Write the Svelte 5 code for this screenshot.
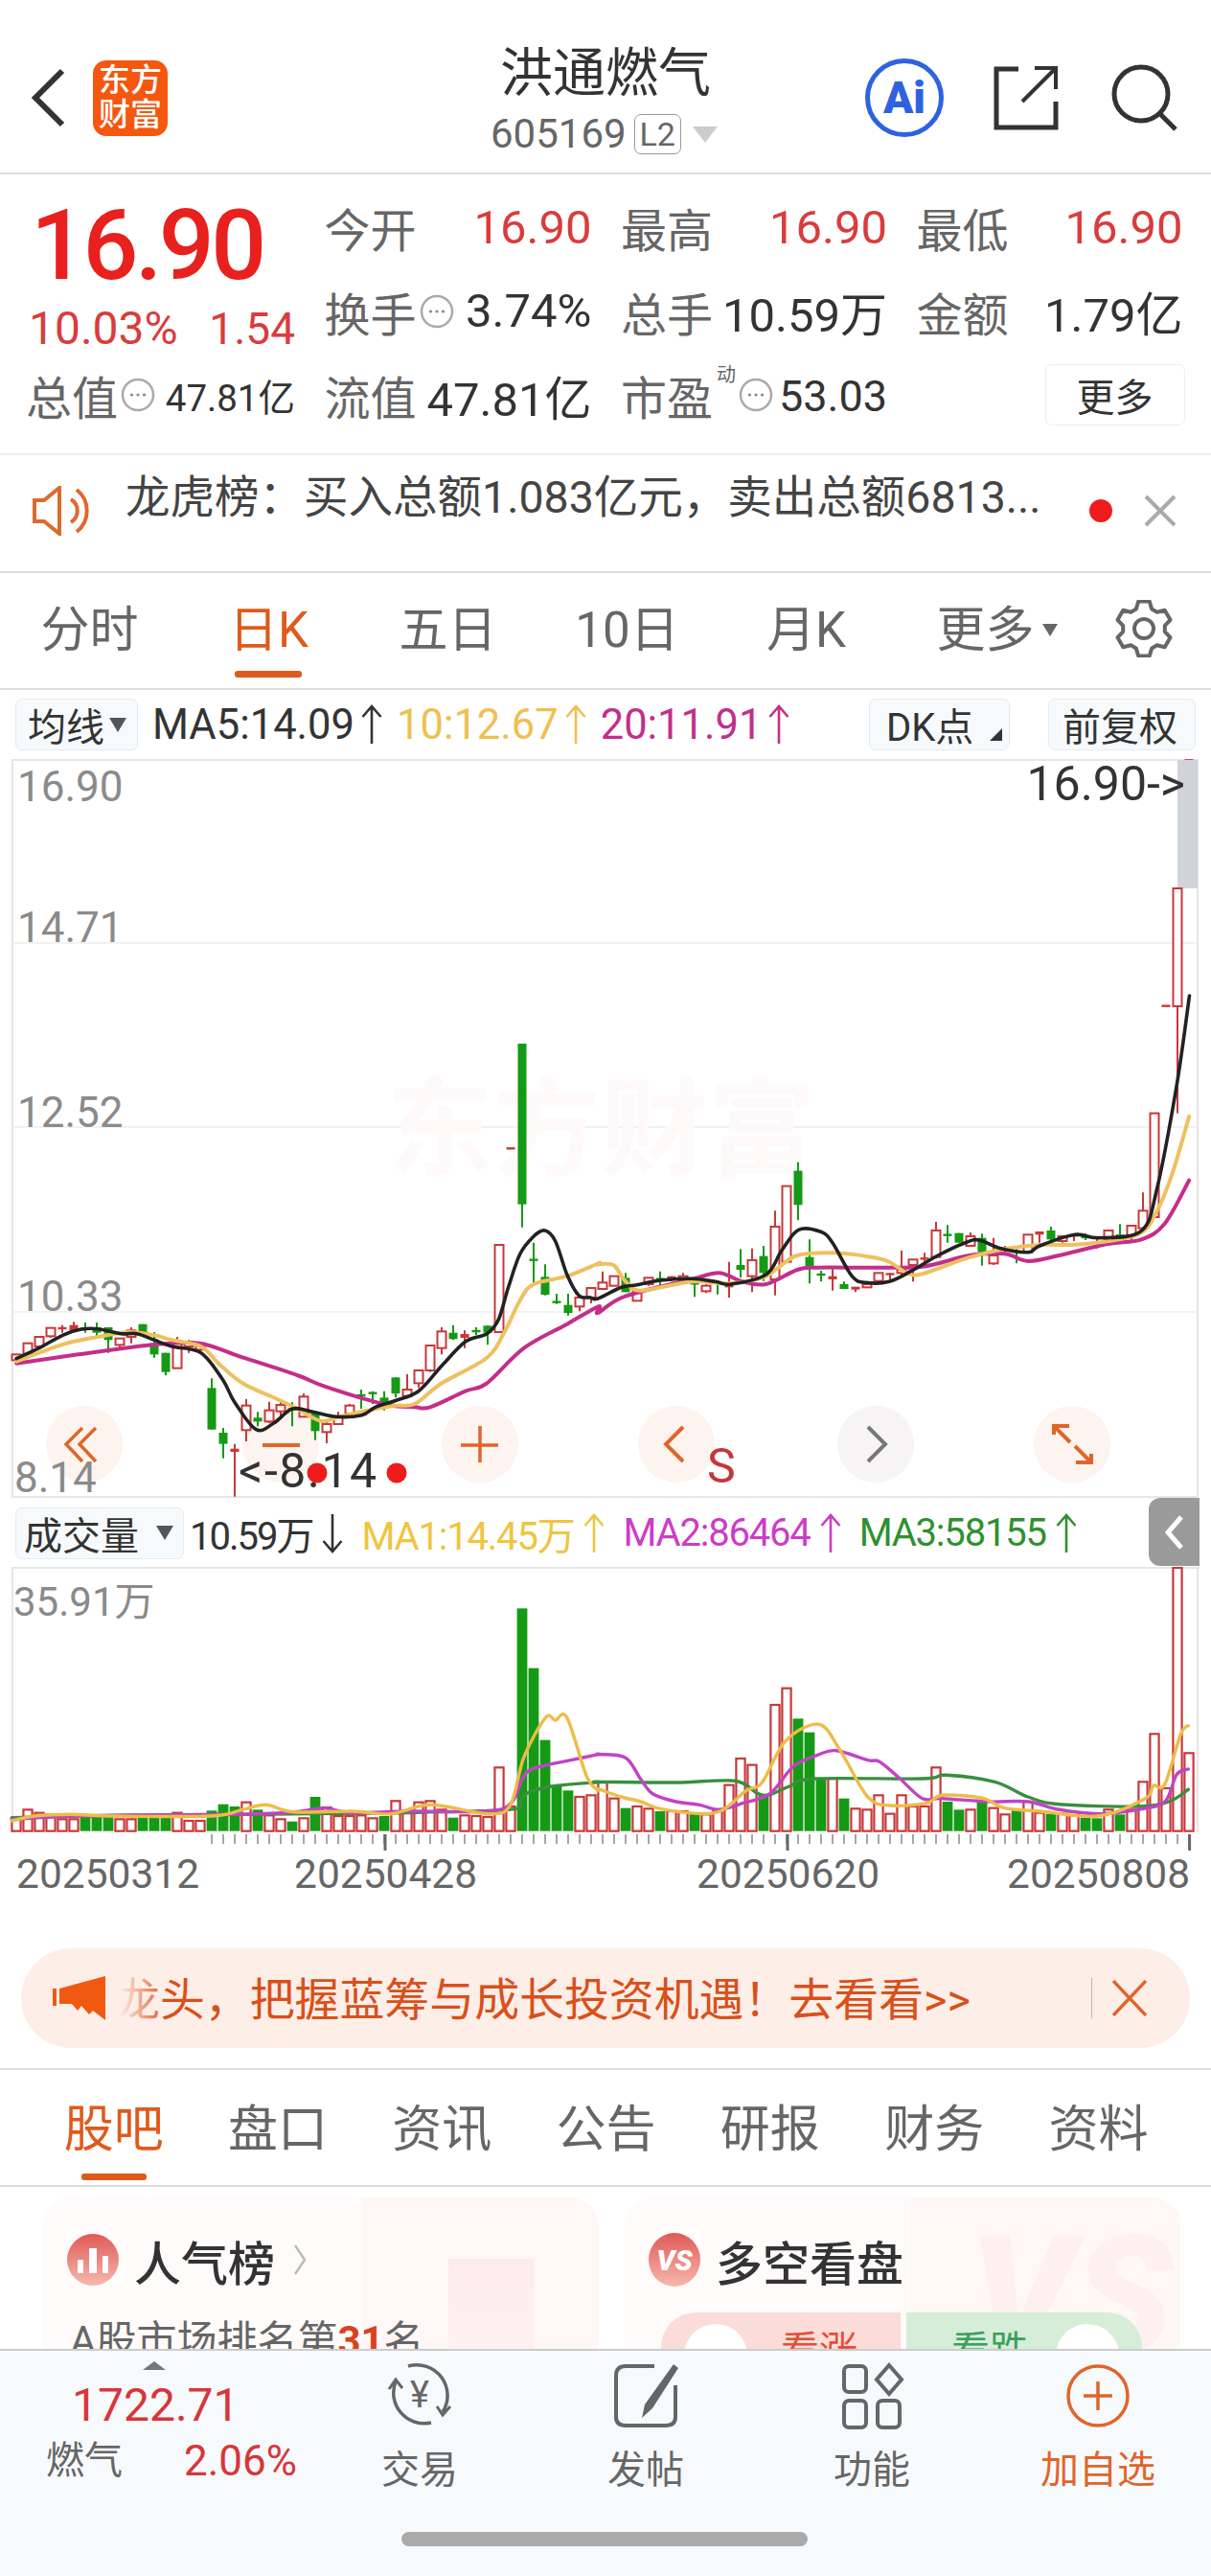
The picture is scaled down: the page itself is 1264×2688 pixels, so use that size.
<script>
  const RED = '#c8383a'
  const GREEN = '#159a16'

  // candles: top, bottom, high, low, colour; y read off the reference crops
  const raw = [
    [790,808,790,808,'r'],[755,790,755,790,'r'],[735,765,735,765,'r'],[707,733,707,738,'r'],[708,710,698,722,'r'],
    [698,715,688,720,'s'],[705,712,690,722,'g'],[705,722,690,735,'g'],[705,745,705,785,'g'],[740,760,740,772,'r'],
    [715,735,705,755,'r'],[695,720,695,725,'g'],[755,790,720,800,'g'],[785,845,785,855,'g'],[750,833,735,833,'r'],
    [750,765,745,785,'r'],[755,775,750,780,'r'],[895,1025,865,1025,'g'],[1035,1070,1020,1115,'g'],[1085,1095,1070,1235,'s'],
    [950,1027,930,1062,'r'],[988,1000,970,1015,'g'],[965,1000,938,1005,'r'],[948,968,938,985,'r'],[958,965,940,1015,'g'],
    [922,985,912,985,'r'],[975,1030,970,1058,'g'],[1008,1033,1000,1068,'r'],[985,1008,970,1010,'r'],[950,975,945,980,'r'],
    [918,922,900,960,'g'],[911,914,905,945,'g'],[925,945,905,965,'g'],[862,912,862,925,'g'],[900,920,852,925,'r'],
    [840,880,840,895,'r'],[762,840,762,845,'r'],[718,770,705,790,'r'],[722,742,698,745,'g'],[726,738,715,770,'s'],
    [717,720,705,730,'g'],[700,722,700,760,'g'],[447,720,447,722,'r'],[145,148,145,148,'s'],[-183,320,-183,392,'g'],
    [494,497,440,568,'g'],[547,603,508,605,'g'],[626,629,600,632,'g'],[635,660,600,668,'g'],[612,640,612,655,'r'],
    [582,612,582,630,'r']
  ]
  const raw2 = [
    [715,735,680,735,'r'],[695,725,695,725,'r'],[700,745,685,745,'g'],[738,772,738,772,'r'],[700,720,700,725,'r'],
    [704,707,680,730,'g'],[695,708,695,712,'s'],[695,705,685,710,'r'],[718,722,705,760,'g'],[725,742,720,748,'r'],
    [714,718,710,752,'g'],[722,730,650,762,'s'],[660,675,610,700,'g'],[645,695,608,745,'r'],[632,685,600,710,'g'],
    [540,705,490,755,'r'],[413,650,413,650,'r'],[365,472,338,520,'g'],[635,663,580,718,'g'],[690,694,678,712,'g'],
    [695,705,672,740,'s'],[720,735,712,735,'g'],[728,737,728,745,'s'],[720,730,720,730,'r'],[685,710,685,710,'r'],
    [685,692,685,705,'s'],[675,685,615,690,'r'],[643,660,643,712,'r'],[640,644,622,650,'s'],[552,635,525,640,'r'],
    [566,570,535,590,'g'],[560,590,560,590,'g'],[570,600,558,600,'r'],[575,620,562,662,'g'],[630,655,575,660,'r'],
    [608,612,600,620,'r'],[618,622,610,655,'g'],[565,620,565,620,'r'],[555,565,555,590,'s'],[552,580,540,585,'g'],
    [570,585,570,590,'r'],[568,572,565,585,'r'],[573,577,562,582,'g'],[573,578,573,608,'r'],[552,580,552,595,'r'],
    [568,572,532,575,'g'],[537,570,537,590,'r'],[490,545,433,545,'r'],[185,510,185,510,'r'],[-151,-149,-151,-149,'s'],
    [-519,-150,-519,185,'r'],[-925,-923,-925,-923,'s']
  ]
  const y3 = (y) => 1150 + y / 3
  const y4 = (y) => 1100 + y / 3
  const candles = [
    ...raw.map((c) => [y3(c[0]), y3(c[1]), y3(c[2]), y3(c[3]), c[4]]),
    ...raw2.map((c) => [y4(c[0]), y4(c[1]), y4(c[2]), y4(c[3]), c[4]])
  ].map((c, i) => ({ x: 17 + 12 * i, top: c[0], bot: c[1], hi: c[2], lo: c[3], kind: c[4] }))

  // volume bars: r hollow, g solid
  const vols = [
    [1017,'r'],[985,'r'],[995,'r'],[1000,'r'],[1015,'r'],[1015,'r'],[1005,'g'],[1005,'g'],[1005,'g'],[1015,'r'],
    [1015,'r'],[1005,'g'],[1005,'g'],[1005,'g'],[995,'r'],[1020,'r'],[1020,'r'],[988,'g'],[968,'g'],[975,'g'],
    [962,'r'],[985,'g'],[1003,'r'],[1015,'r'],[1022,'g'],[1012,'r'],[945,'g'],[978,'r'],[1005,'r'],[1005,'r'],
    [1003,'r'],[1012,'r'],[1005,'g'],[958,'r'],[988,'r'],[962,'r'],[958,'r'],[985,'r'],[1010,'g'],[1003,'r'],
    [1005,'r'],[1008,'r'],[853,'r'],[975,'r'],[355,'g'],[542,'g'],[767,'g'],[910,'g'],[925,'g'],[945,'r'],
    [940,'r'],[900,'r'],[950,'r'],[980,'g'],[975,'r'],[982,'r'],[990,'g'],[990,'r'],[990,'r'],[995,'g'],
    [1000,'r'],[985,'r'],[908,'r'],[825,'r'],[845,'r'],[940,'g'],[657,'r'],[605,'r'],[700,'g'],[743,'g'],
    [888,'g'],[888,'r'],[950,'g'],[982,'r'],[985,'r'],[940,'r'],[998,'r'],[940,'r'],[975,'r'],[975,'r'],
    [853,'r'],[960,'g'],[985,'g'],[985,'r'],[960,'g'],[980,'r'],[1000,'r'],[988,'g'],[960,'r'],[995,'r'],
    [998,'g'],[998,'r'],[1003,'r'],[1010,'g'],[1012,'g'],[985,'r'],[1000,'g'],[985,'r'],[898,'r'],[748,'r'],
    [918,'r'],[228,'r'],[808,'r']
  ].map(([t, k], i) => ({ x: 17 + 12 * i, top: 1560 + t / 3, kind: k }))
  const volBase = 1560 + 1052 / 3

  // Catmull-Rom through the points so the averages stay round
  function smooth(pts) {
    let d = `M${pts[0][0].toFixed(1)} ${pts[0][1].toFixed(1)}`
    for (let i = 0; i < pts.length - 1; i++) {
      const p0 = pts[i - 1] ?? pts[i]
      const p1 = pts[i]
      const p2 = pts[i + 1]
      const p3 = pts[i + 2] ?? p2
      const c1 = [p1[0] + (p2[0] - p0[0]) / 6, p1[1] + (p2[1] - p0[1]) / 6]
      const c2 = [p2[0] - (p3[0] - p1[0]) / 6, p2[1] - (p3[1] - p1[1]) / 6]
      d += `C${c1[0].toFixed(1)} ${c1[1].toFixed(1)} ${c2[0].toFixed(1)} ${c2[1].toFixed(1)} ${p2[0].toFixed(1)} ${p2[1].toFixed(1)}`
    }
    return d
  }
  const kline = (a, b, end = []) =>
    smooth([
      ...a.map(([x, y]) => [x / 2.45, y3(y)]),
      ...b.map(([x, y]) => [624 + x / 2.45, y4(y)]),
      ...end
    ])
  const vline = (a, b) =>
    smooth([
      ...a.map(([x, y]) => [x / 2.45, 1560 + y / 3]),
      ...b.map(([x, y]) => [624 + x / 2.45, 1560 + y / 3])
    ])

  const ma5 = kline(
    [[42,803],[100,770],[160,730],[205,712],[250,710],[310,725],[350,725],[395,745],[440,765],[514,785],[570,870],[600,940],[655,1025],[700,1005],[748,960],[800,970],[860,985],[925,980],[960,955],[1010,935],[1070,905],[1130,825],[1190,750],[1245,725],[1275,680],[1300,580],[1330,475],[1365,420],[1393,402],[1420,435],[1450,540],[1480,605],[1510,612]],
    [[0,765],[60,730],[100,722],[160,708],[240,703],[300,712],[340,720],[430,690],[470,615],[513,550],[570,556],[600,590],[650,695],[685,715],[745,712],[800,680],[870,630],[940,590],[975,582],[1030,608],[1100,620],[1130,600],[1220,565],[1280,575],[1390,553],[1430,420],[1480,100]],
    [[1241.5,1039]]
  )
  const ma10 = kline(
    [[42,812],[100,785],[170,755],[250,735],[330,720],[395,730],[440,745],[514,765],[560,820],[620,880],[700,925],[760,960],[820,998],[870,985],[940,965],[1010,950],[1060,945],[1130,880],[1245,800],[1290,720],[1330,620],[1365,570],[1450,545],[1530,505]],
    [[0,658],[40,660],[70,710],[110,740],[240,712],[330,718],[420,700],[460,670],[510,630],[600,622],[700,635],[745,650],[790,685],[830,688],[940,640],[1040,610],[1130,597],[1240,595],[1380,565],[1430,490],[1470,370],[1512,195]]
  )
  const ma20 = kline(
    [[42,818],[200,790],[390,760],[510,755],[610,795],[760,855],[830,890],[980,945],[1060,955],[1100,955],[1190,905],[1245,880],[1340,770],[1450,695],[1530,640]],
    [[0,810],[70,758],[240,705],[310,685],[370,712],[430,720],[510,675],[560,668],[700,668],[830,665],[950,630],[1040,625],[1100,648],[1180,630],[1300,595],[1390,580],[1450,530],[1512,395]]
  )
  const vma1 = vline(
    [[30,1020],[90,1005],[180,1000],[300,1005],[540,1005],[620,985],[680,970],[750,992],[900,990],[1000,998],[1100,970],[1250,998],[1305,970],[1340,820],[1395,697],[1420,705],[1450,697],[1500,880],[1530,925]],
    [[0,920],[60,945],[110,960],[170,985],[300,995],[380,925],[420,900],[480,770],[565,718],[620,800],[690,945],[750,972],[840,965],[880,940],[980,948],[1040,980],[1130,990],[1280,1005],[1400,950],[1420,910],[1450,905],[1490,750],[1510,722]]
  )
  const vma2 = vline(
    [[30,1015],[180,1005],[340,1003],[600,1000],[750,993],[830,980],[900,995],[1050,990],[1250,990],[1310,960],[1345,870],[1400,845],[1460,830],[1530,812]],
    [[0,812],[70,822],[110,890],[140,935],[200,960],[260,970],[310,985],[370,965],[440,935],[500,850],[560,815],[610,800],[690,830],[720,835],[770,885],[830,950],[880,950],[1000,960],[1100,960],[1180,985],[1280,998],[1380,985],[1450,960],[1480,875],[1510,858]]
  )
  const vma3 = vline(
    [[30,1010],[300,1003],[600,1000],[1000,995],[1300,985],[1330,960],[1345,935],[1410,912],[1530,899]],
    [[0,898],[200,900],[350,895],[410,935],[440,938],[490,912],[555,888],[830,888],[890,877],[1015,898],[1100,945],[1180,968],[1380,975],[1460,960],[1510,922]]
  )

  const ticks = candles.slice(17).map((c) => c.x)
  const majors = [402, 822, 1241.6]

  // six toothed gear outline, centred on 30,30
  function gear() {
    const pts = []
    for (let i = 0; i < 6; i++) {
      const a = (-90 + i * 60) * (Math.PI / 180)
      for (const [off, r] of [[-0.38, 22],[-0.2, 29],[0.2, 29],[0.38, 22]]) {
        pts.push(`${(30 + r * Math.cos(a + off)).toFixed(1)} ${(30 + r * Math.sin(a + off)).toFixed(1)}`)
      }
    }
    return 'M' + pts.join('L') + 'Z'
  }

  const tabs = ['分时', '日K', '五日', '10日', '月K', '更多']
  const infoTabs = ['股吧', '盘口', '资讯', '公告', '研报', '财务', '资料']
</script>

{#snippet info(size)}
  <svg class="info" width={size} height={size} viewBox="0 0 36 36">
    <circle cx="18" cy="18" r="16" fill="none" stroke="#aaa" stroke-width="2.5" />
    <circle cx="11.5" cy="18" r="1.6" fill="#888" />
    <circle cx="18" cy="18" r="1.6" fill="#888" />
    <circle cx="24.5" cy="18" r="1.6" fill="#888" />
  </svg>
{/snippet}

{#snippet arrow(color, down = false)}
  <svg class="arrow" width="22" height="44" viewBox="0 0 22 44">
    {#if down}
      <path d="M11 2V41M1.5 30L11 41L20.5 30" fill="none" stroke={color} stroke-width="2.6" />
    {:else}
      <path d="M11 42V3M1.5 14L11 3L20.5 14" fill="none" stroke={color} stroke-width="2.6" />
    {/if}
  </svg>
{/snippet}

<div class="page">
  <header class="top">
    <svg class="back" width="36" height="62" viewBox="0 0 36 62">
      <path d="M33 3L5 31L33 59" fill="none" stroke="#333" stroke-width="6" />
    </svg>
    <div class="logo"><span>东方</span><span>财富</span></div>
    <div class="title">
      <div class="name">洪通燃气</div>
      <div class="code">605169<span class="l2">L2</span><i class="tri"></i></div>
    </div>
    <svg class="ai" width="84" height="84" viewBox="0 0 84 84">
      <circle cx="42" cy="42" r="38.5" fill="none" stroke="#2e62e0" stroke-width="5" />
      <text x="42" y="58" class="ai-text" text-anchor="middle">Ai</text>
    </svg>
    <svg class="share" width="68" height="68" viewBox="0 0 68 68">
      <path d="M26 4H3V65H65V38" fill="none" stroke="#333" stroke-width="5" />
      <path d="M30 38L63 5M43 3H65V25" fill="none" stroke="#333" stroke-width="4" />
    </svg>
    <svg class="search" width="70" height="70" viewBox="0 0 70 70">
      <circle cx="31" cy="31" r="28" fill="none" stroke="#333" stroke-width="5" />
      <path d="M50 51L67 68" stroke="#333" stroke-width="5" />
    </svg>
  </header>

  <section class="stats">
    <div class="price">
      <div class="big">16.90</div>
      <div class="chg"><span class="pct">10.03%</span><span>1.54</span></div>
    </div>
    <div class="cell"><b>今开</b><em class="up">16.90</em></div>
    <div class="cell"><b>最高</b><em class="up">16.90</em></div>
    <div class="cell"><b>最低</b><em class="up">16.90</em></div>
    <div class="cell"><b>换手</b>{@render info(36)}<em>3.74%</em></div>
    <div class="cell"><b>总手</b><em>10.59万</em></div>
    <div class="cell"><b>金额</b><em>1.79亿</em></div>
    <div class="cell"><b>总值</b>{@render info(36)}<em class="small">47.81亿</em></div>
    <div class="cell"><b>流值</b><em>47.81亿</em></div>
    <div class="cell"><b>市盈</b><sup>动</sup>{@render info(36)}<em class="tight">53.03</em></div>
    <div class="cell more-cell"><button class="more">更多</button></div>
  </section>

  <section class="notice">
    <svg class="horn" width="62" height="52" viewBox="0 0 62 52">
      <path d="M2 15H12L28 2V50L12 37H2Z" fill="none" stroke="#dd6a2c" stroke-width="4" />
      <path d="M40 14A14 14 0 0 1 40 38M46 4A28 28 0 0 1 46 48" fill="none" stroke="#dd6a2c" stroke-width="4" />
    </svg>
    <div class="notice-text">龙虎榜：买入总额1.083亿元，卖出总额6813...</div>
    <span class="dot"></span>
    <svg class="close" width="34" height="34" viewBox="0 0 34 34">
      <path d="M2 2L32 32M32 2L2 32" stroke="#aaa" stroke-width="4" />
    </svg>
  </section>

  <nav class="tabs">
    {#each tabs as t, i}
      <div class="tab" class:on={i === 1}>
        {t}{#if i === 5}<i class="tab-tri"></i>{/if}
      </div>
    {/each}
    <svg class="gear" width="60" height="60" viewBox="0 0 60 60">
      <path d={gear()} fill="none" stroke="#666" stroke-width="4" stroke-linejoin="round" />
      <circle cx="30" cy="30" r="10" fill="none" stroke="#666" stroke-width="4" />
    </svg>
  </nav>

  <div class="tool">
    <div class="chip ma">均线<i class="chip-tri"></i></div>
    <span class="val dark">MA5:14.09</span>{@render arrow('#333')}
    <span class="val gold">10:12.67</span>{@render arrow('#efc050')}
    <span class="val plum">20:11.91</span>{@render arrow('#c42e8a')}
    <div class="chip dk">DK点<i class="corner"></i></div>
    <div class="chip fq">前复权</div>
  </div>

  <svg class="chart" width="1264" height="772" viewBox="0 792 1264 772">
    <rect x="13" y="793" width="1237" height="769" fill="#fff" stroke="#e6e6e6" stroke-width="2" />
    <rect x="1229" y="793" width="21" height="134" fill="#d0d4da" />
    {#each [984, 1176, 1369] as y}
      <line x1="13" x2="1250" y1={y} y2={y} stroke="#eee" stroke-width="1.5" />
    {/each}
    <text x="403" y="1218" class="mark">东方财富</text>

    {#each [88, 293, 501, 706, 1119] as cx}
      <circle {cx} cy="1507" r="40" fill="#fdf1ec" opacity="0.85" />
    {/each}
    <circle cx="914" cy="1507" r="40" fill="#f6f4f4" />

    <text x="18" y="836" class="axis">16.90</text>
    <text x="18" y="983" class="axis">14.71</text>
    <text x="18" y="1176" class="axis">12.52</text>
    <text x="18" y="1368" class="axis">10.33</text>
    <text x="15" y="1557" class="axis">8.14</text>

    {#each candles as c}
      {@const col = c.kind === 'g' ? GREEN : RED}
      <line x1={c.x} x2={c.x} y1={c.hi} y2={c.lo} stroke={col} stroke-width="2" />
      {#if c.bot - c.top < 2}
        <line x1={c.x - 4.5} x2={c.x + 4.5} y1={c.top} y2={c.top} stroke={col} stroke-width="2.4" />
      {:else if c.kind === 'r'}
        <rect x={c.x - 4.5} y={c.top} width="9" height={c.bot - c.top} fill="#fff" stroke={col} stroke-width="2" />
      {:else}
        <rect x={c.x - 4.5} y={c.top} width="9" height={c.bot - c.top} fill={col} />
      {/if}
    {/each}

    <path d={ma20} class="line" stroke="#c42e8a" stroke-width="4" />
    <path d={ma10} class="line" stroke="#efc060" stroke-width="4" />
    <path d={ma5} class="line" stroke="#222" stroke-width="3.6" />

    <path d="M86 1490L69 1507L86 1525M100 1490L83 1507L100 1525" fill="none" stroke="#e0652a" stroke-width="3.5" />
    <path d="M274 1508H313" stroke="#e0652a" stroke-width="4" />
    <path d="M481 1508H520M501 1488V1526" stroke="#e0652a" stroke-width="3.5" />
    <path d="M713 1489L695 1507L713 1525" fill="none" stroke="#e0652a" stroke-width="4" />
    <path d="M906 1489L924 1507L906 1525" fill="none" stroke="#777" stroke-width="4" />
    <path d="M1100 1497V1488H1116M1101 1489L1117 1505M1139 1517V1526H1123M1138 1525L1122 1509" fill="none" stroke="#e0652a" stroke-width="4" />

    <text x="738" y="1547" class="s">S</text>
    <text x="249" y="1552" class="tag low">&lt;-8.14</text>
    <circle cx="331" cy="1537" r="10.5" fill="#ee1c1c" />
    <circle cx="414" cy="1537" r="10.5" fill="#ee1c1c" />
    <text x="1237" y="835" class="tag" text-anchor="end">16.90-&gt;</text>
  </svg>

  <div class="subtool">
    <div class="chip vol">成交量<i class="chip-tri wide"></i></div>
    <span class="val thin tighter dark">10.59万</span>{@render arrow('#333', true)}
    <span class="val thin mellow">MA1:14.45万</span>{@render arrow('#eec53f')}
    <span class="val thin pink">MA2:86464</span>{@render arrow('#cc3cc8')}
    <span class="val thin moss">MA3:58155</span>{@render arrow('#2f9030')}
    <div class="fold">
      <svg width="20" height="36" viewBox="0 0 20 36">
        <path d="M17 2L3 18L17 34" fill="none" stroke="#fff" stroke-width="5" />
      </svg>
    </div>
  </div>

  <svg class="chart" width="1264" height="398" viewBox="0 1635 1264 398">
    <line x1="12" x2="1252" y1="1636" y2="1636" stroke="#e6e6e6" stroke-width="2" />
    <line x1="13" x2="13" y1="1636" y2="1912" stroke="#e6e6e6" stroke-width="2" />
    <line x1="1250" x2="1250" y1="1636" y2="1912" stroke="#e6e6e6" stroke-width="2" />
    <text x="14" y="1686" class="axis vol-axis">35.91万</text>
    {#each vols as v}
      {#if v.kind === 'g'}
        <rect x={v.x - 5.4} y={v.top} width="10.8" height={volBase - v.top} fill={GREEN} />
      {:else}
        <rect x={v.x - 4.6} y={v.top} width="9.2" height={volBase - v.top} fill="#fff" stroke={RED} stroke-width="2.2" />
      {/if}
    {/each}
    <path d={vma3} class="line" stroke="#3a8e3e" stroke-width="3.4" />
    <path d={vma2} class="line" stroke="#c044c4" stroke-width="3.4" />
    <path d={vma1} class="line" stroke="#eebc48" stroke-width="3.4" />
    {#each ticks as x}
      <line x1={x} x2={x} y1="1914" y2="1924" stroke="#888" stroke-width="1.5" />
    {/each}
    {#each majors as x}
      <line x1={x} x2={x} y1="1914" y2="1931" stroke="#666" stroke-width="3" />
    {/each}
    <text x="17" y="1970" class="date">20250312</text>
    <text x="307" y="1970" class="date">20250428</text>
    <text x="727" y="1970" class="date">20250620</text>
    <text x="1051" y="1970" class="date">20250808</text>
  </svg>

  <section class="banner-wrap">
    <div class="banner">
      <svg width="56" height="46" viewBox="0 0 56 46">
        <path d="M0 13H4V31H0ZM7 13L55 0V46L42 36L38 40L30 31L26 36L20 29H7Z" fill="#f0590f" />
      </svg>
      <div class="scroll">龙头，把握蓝筹与成长投资机遇！去看看&gt;&gt;<i class="fade"></i></div>
      <span class="sep"></span>
      <svg width="38" height="38" viewBox="0 0 38 38">
        <path d="M2 1L36 37M36 1L2 37" stroke="#e0652a" stroke-width="3.4" />
      </svg>
    </div>
  </section>

  <nav class="info-tabs">
    {#each infoTabs as t, i}
      <div class="info-tab" class:on={i === 0}>{t}</div>
    {/each}
  </nav>

  <section class="cards">
    <div class="card">
      <i class="tint"></i>
      <i class="pillar"></i>
      <div class="card-head">
        <svg width="54" height="56" viewBox="0 0 54 56">
          <defs>
            <linearGradient id="badge" x1="0" y1="0" x2="0" y2="1">
              <stop offset="0" stop-color="#df5a56" />
              <stop offset="1" stop-color="#f6b8ae" />
            </linearGradient>
          </defs>
          <circle cx="27" cy="28" r="27" fill="url(#badge)" />
          <path d="M11 42V28H17V42ZM23 42V16H31V42ZM37 42V24H43V42Z" fill="#fff" />
        </svg>
        <h3>人气榜</h3>
        <svg class="chev" width="14" height="34" viewBox="0 0 14 34">
          <path d="M2 2L12 17L2 32" fill="none" stroke="#bbb" stroke-width="2.5" />
        </svg>
      </div>
      <p class="rank">A股市场排名第<strong>31</strong>名</p>
    </div>
    <div class="card">
      <i class="tint wide"></i>
      <span class="vs-mark">VS</span>
      <div class="card-head">
        <div class="vs">VS</div>
        <h3>多空看盘</h3>
      </div>
      <div class="vote">
        <div class="bull"><i></i><span>看涨</span></div>
        <div class="bear"><span>看跌</span><i></i></div>
      </div>
    </div>
  </section>

  <footer class="bar">
    <div class="index">
      <i class="idx-tri"></i>
      <div class="idx-val">1722.71</div>
      <div class="idx-row"><span>燃气</span><em>2.06%</em></div>
    </div>
    <div class="act">
      <svg width="84" height="70" viewBox="0 0 84 70">
        <path d="M30 4A32 32 0 0 1 66 52M54 63A32 32 0 0 1 17 20" fill="none" stroke="#666" stroke-width="3.5" />
        <path d="M10 28L17 18L24 27M60 46L66 55L74 46" fill="none" stroke="#666" stroke-width="3" />
        <text x="42" y="47" class="yen" text-anchor="middle">¥</text>
      </svg>
      <span>交易</span>
    </div>
    <div class="act">
      <svg width="70" height="70" viewBox="0 0 70 70">
        <path d="M44 4H14Q4 4 4 14V57Q4 66 14 66H56Q66 66 66 57V24" fill="none" stroke="#666" stroke-width="4" />
        <path d="M64 2L69 6L42 48L31 58L34 44Z" fill="#666" />
      </svg>
      <span>发帖</span>
    </div>
    <div class="act">
      <svg width="70" height="70" viewBox="0 0 70 70">
        <g fill="none" stroke="#666" stroke-width="4">
          <rect x="6" y="4" width="23" height="27" rx="5" />
          <path d="M53 3L66 18L53 33L40 18Z" />
          <rect x="6" y="40" width="23" height="28" rx="5" />
          <rect x="41" y="40" width="23" height="28" rx="5" />
        </g>
      </svg>
      <span>功能</span>
    </div>
    <div class="act add">
      <svg width="70" height="70" viewBox="0 0 70 70">
        <circle cx="35" cy="35" r="31" fill="none" stroke="#e0652a" stroke-width="3.5" />
        <path d="M20 35H50M35 20V50" stroke="#e0652a" stroke-width="3.5" />
      </svg>
      <span>加自选</span>
    </div>
    <i class="home"></i>
  </footer>
</div>

<style>
  :global(body) {
    background: #fff;
  }

  .page {
    position: relative;
    width: 1264px;
    height: 2688px;
    overflow: hidden;
    background: #fff;
    font-family: Roboto, "Noto Sans CJK SC", sans-serif;
    color: #333;
  }

  .top {
    position: relative;
    display: flex;
    align-items: center;
    height: 182px;
    box-sizing: border-box;
    padding: 0 34px 0 32px;
    border-bottom: 2px solid #ddd;
  }

  .back {
    margin-right: 29px;
    margin-top: 24px;
  }

  .logo {
    display: flex;
    flex-direction: column;
    align-items: center;
    justify-content: center;
    width: 78px;
    height: 79px;
    margin-top: 24px;
    border-radius: 14px;
    background: #f5570f;
    color: #fff;
    font-size: 33px;
    font-weight: 500;
    line-height: 36px;
  }

  .title {
    position: absolute;
    left: 512px;
    top: 40px;
    width: 240px;
    text-align: center;
  }

  .name {
    font-size: 55px;
    line-height: 66px;
    color: #333;
    margin: 3px 0 0 -8px;
    width: 256px;
  }

  .code {
    display: flex;
    align-items: center;
    margin-top: 7px;
    font-size: 42px;
    line-height: 48px;
    color: #666;
  }

  .l2 {
    width: 47px;
    height: 40px;
    margin-left: 8px;
    border: 1.5px solid #999;
    border-radius: 7px;
    font-size: 34px;
    line-height: 40px;
    text-align: center;
  }

  .tri {
    width: 0;
    height: 0;
    margin-left: 12px;
    border-left: 13px solid transparent;
    border-right: 13px solid transparent;
    border-top: 17px solid #ccc;
  }

  .ai {
    margin-left: auto;
    margin-top: 24px;
  }

  .ai-text {
    font-size: 46px;
    font-weight: 900;
    fill: #2e62e0;
  }

  .share {
    margin-left: 51px;
    margin-top: 24px;
  }

  .search {
    margin-left: 55px;
    margin-top: 24px;
  }

  .stats {
    display: grid;
    grid-template-columns: 280px 278px 277px 277px;
    grid-template-rows: 88px 87px 88px;
    column-gap: 31.5px;
    align-items: center;
    height: 293px;
    box-sizing: border-box;
    padding: 11px 0 0 28px;
    border-bottom: 2px solid #eee;
  }

  .price {
    grid-row: 1 / span 2;
    align-self: stretch;
  }

  .big {
    margin: 17px 0 0 4px;
    font-size: 102px;
    font-weight: 500;
    line-height: 92px;
    letter-spacing: -3.5px;
    color: #e8201e;
  }

  .chg {
    display: flex;
    justify-content: space-between;
    margin-top: 16px;
    font-size: 46px;
    line-height: 50px;
    color: #d93c3c;
  }

  .chg .pct {
    margin-left: 2px;
    font-size: 48px;
  }

  .cell {
    display: flex;
    align-items: center;
    height: 60px;
  }

  .cell b {
    margin-left: -1px;
    font-weight: 400;
    font-size: 48px;
    color: #666;
  }

  .cell em {
    margin-left: auto;
    font-style: normal;
    font-size: 49px;
    color: #333;
    white-space: nowrap;
  }

  .cell em.up {
    color: #d93c3c;
  }

  .cell em.small {
    font-size: 38.5px;
  }

  .cell em.tight {
    font-size: 45px;
    padding-top: 3px;
  }

  .info {
    margin-left: 3px;
  }

  sup {
    width: 20px;
    margin: -42px 0 0 4px;
    font-size: 20px;
    line-height: 24px;
    color: #666;
  }

  .more-cell {
    justify-content: flex-end;
  }

  .more {
    width: 146px;
    height: 64px;
    margin-right: -2px;
    padding: 0;
    background: #fff;
    border: 1.5px solid #eee;
    border-radius: 7px;
    font: inherit;
    font-size: 40px;
    color: #333;
  }

  .notice {
    display: flex;
    align-items: center;
    height: 123px;
    box-sizing: border-box;
    padding: 0 36px 0 34px;
    border-bottom: 2px solid #ddd;
  }

  .horn {
    margin: -6px 0 0 0;
  }

  .notice-text {
    margin: -42px 0 0 35px;
    font-size: 46.5px;
    color: #444;
    white-space: nowrap;
  }

  .dot {
    width: 24px;
    height: 24px;
    margin: -6px 0 0 auto;
    border-radius: 50%;
    background: #ee1c1c;
  }

  .close {
    margin: -6px 0 0 33px;
  }

  .tabs {
    display: grid;
    grid-template-columns: repeat(6, 187px) 60px;
    align-items: center;
    height: 122px;
    box-sizing: border-box;
    border-bottom: 2px solid #ddd;
    font-size: 51px;
    color: #666;
  }

  .tab {
    position: relative;
    text-align: center;
    line-height: 120px;
  }

  .tab.on {
    color: #e05a1c;
  }

  .tab.on::after {
    content: "";
    position: absolute;
    left: 58px;
    bottom: 11px;
    width: 70px;
    height: 7px;
    border-radius: 3px;
    background: #e05a1c;
  }

  .tab-tri {
    position: absolute;
    top: 53px;
    right: 18px;
    border-left: 8px solid transparent;
    border-right: 8px solid transparent;
    border-top: 13px solid #666;
  }

  .gear {
    margin-left: 42px;
    margin-top: -4px;
  }

  .tool,
  .subtool {
    position: relative;
    display: flex;
    align-items: center;
    box-sizing: border-box;
    height: 72px;
    padding-left: 16px;
    white-space: nowrap;
  }

  .subtool {
    height: 71px;
  }

  .chip {
    position: relative;
    display: flex;
    align-items: center;
    height: 54px;
    box-sizing: border-box;
    padding-left: 12px;
    background: #f7fafc;
    border: 1.5px solid #e6ebf0;
    border-radius: 7px;
    font-size: 40px;
    color: #333;
  }

  .chip.ma {
    width: 128px;
    margin-right: 15px;
  }

  .chip.vol {
    width: 176px;
    margin-right: 6px;
    padding-left: 8px;
  }

  .chip.dk {
    position: absolute;
    left: 907px;
    width: 147px;
    padding-left: 17px;
  }

  .chip.fq {
    position: absolute;
    left: 1094px;
    width: 154px;
    padding-left: 14px;
  }

  .chip-tri {
    width: 0;
    height: 0;
    margin-left: 5px;
    border-left: 9px solid transparent;
    border-right: 9px solid transparent;
    border-top: 15px solid #555;
  }

  .chip-tri.wide {
    margin-left: 18px;
  }

  .corner {
    position: absolute;
    right: 7px;
    bottom: 9px;
    border-left: 13px solid transparent;
    border-bottom: 13px solid #333;
  }

  .val {
    font-size: 43.5px;
  }

  .val.thin {
    font-size: 40px;
    letter-spacing: -1.2px;
  }

  .val.tighter {
    letter-spacing: -2px;
  }

  .dark { color: #333; }
  .gold { color: #efc050; }
  .plum { color: #c42e8a; }
  .mellow { color: #eec53f; }
  .pink { color: #cc3cc8; }
  .moss { color: #2f9030; }

  .arrow {
    margin: 0 15px 0 7px;
    flex: none;
  }

  .subtool .arrow {
    margin: 0 19px 0 10px;
  }

  .fold {
    position: absolute;
    right: 12px;
    top: -1px;
    display: flex;
    align-items: center;
    justify-content: center;
    width: 53px;
    height: 71px;
    border-radius: 12px 0 0 12px;
    background: #9a9a9a;
  }

  .chart {
    display: block;
  }

  .axis {
    font-size: 44px;
    fill: #8a8a8a;
  }

  .vol-axis {
    font-size: 42px;
  }

  .date {
    font-size: 42.5px;
    fill: #666;
  }

  .tag {
    font-size: 50px;
    fill: #333;
  }

  .tag.low {
    letter-spacing: 1.5px;
  }

  .s {
    font-size: 50px;
    fill: #c8343a;
  }

  .mark {
    font-size: 112px;
    font-weight: 700;
    fill: #fefafa;
  }

  .line {
    fill: none;
    stroke-linejoin: round;
    stroke-linecap: round;
  }

  .banner-wrap {
    height: 127px;
    box-sizing: border-box;
    padding: 0 22px;
    border-bottom: 2px solid #ddd;
  }

  .banner {
    display: flex;
    align-items: center;
    height: 104px;
    box-sizing: border-box;
    padding: 0 44px 0 33px;
    border-radius: 52px;
    background: #fdeee8;
    color: #d9501a;
  }

  .scroll {
    position: relative;
    margin: -5px 0 0 9px;
    font-size: 46.9px;
    white-space: nowrap;
  }

  .fade {
    position: absolute;
    left: 0;
    top: 0;
    width: 46px;
    height: 100%;
    background: linear-gradient(90deg, #fdeee8 10%, rgba(253, 238, 232, 0.2));
  }

  .sep {
    width: 1.5px;
    height: 42px;
    margin-left: auto;
    margin-right: 20px;
    background: #c8b0a6;
  }

  .info-tabs {
    display: grid;
    grid-template-columns: repeat(7, 171.3px);
    align-items: center;
    height: 122px;
    box-sizing: border-box;
    padding-left: 33px;
    border-bottom: 2px solid #ddd;
    font-size: 52px;
    color: #666;
  }

  .info-tab {
    position: relative;
    text-align: center;
    line-height: 125px;
  }

  .info-tab.on {
    color: #e05a1c;
  }

  .info-tab.on::after {
    content: "";
    position: absolute;
    left: 52px;
    bottom: 10px;
    width: 68px;
    height: 7px;
    border-radius: 3px;
    background: #e05a1c;
  }

  .cards {
    display: grid;
    grid-template-columns: 581px 580px;
    column-gap: 27px;
    height: 169px;
    box-sizing: border-box;
    padding: 11px 0 0 44px;
    overflow: hidden;
  }

  .card {
    position: relative;
    height: 240px;
    border-radius: 30px;
    background: #fffbfa;
    overflow: hidden;
  }

  .tint {
    position: absolute;
    right: 0;
    top: 0;
    width: 246px;
    height: 100%;
    background: #fff7f6;
  }

  .tint.wide {
    width: 281px;
  }

  .pillar {
    position: absolute;
    left: 424px;
    top: 64px;
    width: 89px;
    height: 176px;
    background: linear-gradient(180deg, #fdeceb, #fff5f3);
  }

  .vs-mark {
    position: absolute;
    right: 8px;
    top: 28px;
    font-size: 170px;
    font-weight: 900;
    font-style: italic;
    line-height: 150px;
    color: #fdf0ef;
  }

  .card-head {
    position: relative;
    display: flex;
    align-items: center;
    height: 56px;
    margin: 37px 0 0 26px;
  }

  .card-head h3 {
    margin: 0 0 0 16px;
    font-size: 49px;
    font-weight: 500;
    color: #333;
  }

  .chev {
    margin-left: 19px;
  }

  .vs {
    display: flex;
    align-items: center;
    justify-content: center;
    width: 54px;
    height: 56px;
    margin-left: -1px;
    border-radius: 50%;
    background: linear-gradient(180deg, #df5a56, #f6b8ae);
    color: #fff;
    font-size: 30px;
    font-style: italic;
    font-weight: 900;
  }

  .rank {
    position: relative;
    margin: 33px 0 0 29px;
    font-size: 42px;
    line-height: 48px;
    color: #666;
  }

  .rank strong {
    color: #d9431e;
    font-weight: 700;
  }

  .vote {
    position: relative;
    display: flex;
    gap: 6px;
    margin: 27px 0 0 38px;
    font-size: 40px;
  }

  .bull,
  .bear {
    position: relative;
    flex: none;
    width: 250px;
    height: 80px;
    line-height: 80px;
    border-radius: 36px 0 0 0;
    background: #fbdcd8;
    color: #e0503a;
    text-align: right;
    padding-right: 45px;
    box-sizing: border-box;
  }

  .bear {
    width: 246px;
    border-radius: 0 36px 0 0;
    background: #d6eed8;
    color: #3aa05a;
    text-align: left;
    padding: 0 0 0 47px;
  }

  .bull i,
  .bear i {
    position: absolute;
    top: 12px;
    width: 66px;
    height: 66px;
    border-radius: 50%;
    background: #fff;
  }

  .bull i { left: 24px; }
  .bear i { right: 24px; }

  .bar {
    position: relative;
    display: grid;
    grid-template-columns: 382px 236px 236px 236px 1fr;
    height: 237px;
    box-sizing: border-box;
    border-top: 2px solid #ccc;
    background: #f7fafd;
  }

  .index {
    position: relative;
  }

  .idx-tri {
    position: absolute;
    left: 149px;
    top: 11px;
    border-left: 12px solid transparent;
    border-right: 12px solid transparent;
    border-bottom: 9px solid #777;
  }

  .idx-val {
    position: absolute;
    left: 75px;
    top: 31px;
    font-size: 48px;
    line-height: 52px;
    color: #d8353a;
  }

  .idx-row {
    position: absolute;
    left: 48px;
    top: 90px;
    display: flex;
    align-items: center;
    width: 262px;
    font-size: 40px;
    line-height: 50px;
    color: #666;
  }

  .idx-row em {
    margin-left: auto;
    font-style: normal;
    font-size: 44px;
    color: #d8353a;
  }

  .act {
    display: flex;
    flex-direction: column;
    align-items: center;
    width: 160px;
    margin-left: -24px;
    padding-top: 12px;
    font-size: 40px;
    line-height: 48px;
    color: #666;
  }

  .act span {
    margin-top: 19px;
  }

  .act.add {
    color: #e0652a;
  }

  .yen {
    font-size: 38px;
    fill: #666;
  }

  .home {
    position: absolute;
    left: 419px;
    top: 189px;
    width: 424px;
    height: 15px;
    border-radius: 8px;
    background: #aaa;
  }
</style>
